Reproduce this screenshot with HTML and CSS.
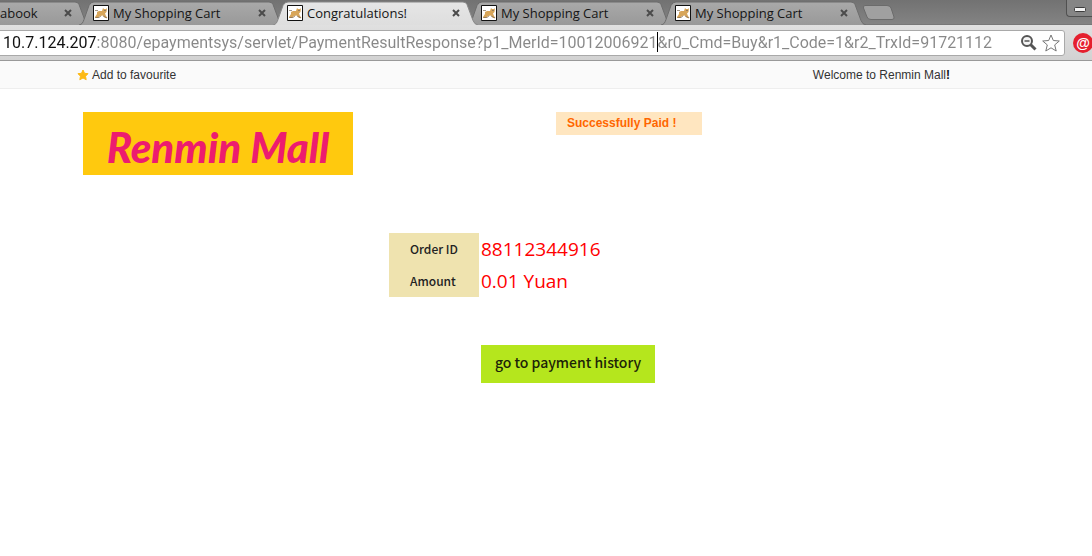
FILE: index.html
```html
<!DOCTYPE html>
<html lang="en">
<head>
<meta charset="utf-8">
<title>Congratulations!</title>
<link rel="stylesheet" href="styles.css">
</head>
<body>
<svg class="defs" aria-hidden="true">
  <defs>
    <linearGradient id="idle" x1="0" y1="0" x2="0" y2="1"><stop offset="0" stop-color="#a9a9a9"/><stop offset="1" stop-color="#999"/></linearGradient>
    <linearGradient id="front" x1="0" y1="0" x2="0" y2="1"><stop offset="0" stop-color="#e6e6e6"/><stop offset="1" stop-color="#dedede"/></linearGradient>
    <symbol id="tab-shape" viewBox="0 0 208 24"><path d="M0 24.5C3 24 4 22 5 19L10 5Q11.5 1.500 15 1.500H190Q193 1.500 194 4L200 20Q201.500 24 205 24.500"/></symbol>
    <symbol id="cat" viewBox="0 0 16 16">
      <path fill="#fff" stroke="#111" d="M.5.5h15v15H.5z"/>
      <path fill="#d8a65a" d="M2 12L4 9L4 7L6 6L9 6L10 3L11 4H13L14 3L13.500 7L12 8.500L13 11L14.500 13H12L10 10.500L7 11L5 13H2Z"/>
      <path fill="none" stroke="#7d6a58" stroke-width=".7" d="M2 5.500H5M2.500 12.500H6L8 11M10 11L14 13M11 5.500H13"/>
    </symbol>
  </defs>
</svg>
<header class="browser">
  <div class="tabstrip">
    <div class="tabs">
      <div class="tab first"><svg class="shape"><use href="#tab-shape"/></svg><span class="title">abook</span><button class="close" aria-label="Close tab"><svg viewBox="0 0 8 8"><path d="M1 1L7 7M7 1L1 7"/></svg></button></div>
      <div class="tab"><svg class="shape"><use href="#tab-shape"/></svg><svg class="favicon"><use href="#cat"/></svg><span class="title">My Shopping Cart</span><button class="close" aria-label="Close tab"><svg viewBox="0 0 8 8"><path d="M1 1L7 7M7 1L1 7"/></svg></button></div>
      <div class="tab active"><svg class="shape"><use href="#tab-shape"/></svg><svg class="favicon"><use href="#cat"/></svg><span class="title">Congratulations!</span><button class="close" aria-label="Close tab"><svg viewBox="0 0 8 8"><path d="M1 1L7 7M7 1L1 7"/></svg></button></div>
      <div class="tab"><svg class="shape"><use href="#tab-shape"/></svg><svg class="favicon"><use href="#cat"/></svg><span class="title">My Shopping Cart</span><button class="close" aria-label="Close tab"><svg viewBox="0 0 8 8"><path d="M1 1L7 7M7 1L1 7"/></svg></button></div>
      <div class="tab"><svg class="shape"><use href="#tab-shape"/></svg><svg class="favicon"><use href="#cat"/></svg><span class="title">My Shopping Cart</span><button class="close" aria-label="Close tab"><svg viewBox="0 0 8 8"><path d="M1 1L7 7M7 1L1 7"/></svg></button></div>
    </div>
    <button class="new-tab" aria-label="New tab"><svg viewBox="0 0 34 16"><path d="M3 .5H25Q28 .5 29 3L32 12Q32.500 14.500 30 14.500H9Q6 14.500 5 12L1.500 3Q1 .5 3 .5Z"/></svg></button>
    <button class="minimise" aria-label="Minimise"><svg viewBox="0 0 12 5"><rect x=".5" y=".5" width="11" height="4" rx="1"/></svg></button>
  </div>
  <div class="toolbar">
    <div class="omnibox">
      <input class="url" type="text" aria-label="Address" value="10.7.124.207:8080/epaymentsys/servlet/PaymentResultResponse?p1_MerId=10012006921&amp;r0_Cmd=Buy&amp;r1_Code=1&amp;r2_TrxId=91721112">
      <span class="caret"></span>
      <button class="tool" aria-label="Zoom"><svg viewBox="0 0 18 18"><circle cx="7" cy="7" r="5" fill="#f4f4f4" stroke="#555" stroke-width="2"/><path fill="none" stroke="#555" stroke-width="1.500" d="M4.500 7H9.500"/><path stroke="#555" stroke-width="3" d="M10.500 10.500L15.500 15.500"/></svg></button>
      <button class="tool" aria-label="Bookmark"><svg viewBox="0 0 18 18"><path fill="#fff" stroke="#777" d="M9 1L11.300 6.500L17.300 7L12.700 10.900L14.200 17L9 13.800L3.800 17L5.300 10.900L.7 7L6.700 6.500Z"/></svg></button>
    </div>
    <button class="extension" aria-label="Extension">@</button>
  </div>
</header>
<nav class="topbar">
  <a class="favourite" href="#"><svg viewBox="0 0 12 12"><path fill="#fdb913" stroke="#fdb913" stroke-linejoin="round" d="M6 1L7.500 4.300L11 4.700L8.500 7.200L9.200 10.700L6 9L2.800 10.700L3.500 7.200L1 4.700L4.500 4.300Z"/></svg>Add to favourite</a>
  <span>Welcome to Renmin Mall<b>!</b></span>
</nav>
<main>
  <div class="masthead">
    <h1 class="logo">Renmin Mall</h1>
    <p class="status">Successfully Paid !</p>
  </div>
  <section class="result">
    <dl class="order">
      <dt>Order ID</dt><dd>88112344916</dd>
      <dt>Amount</dt><dd>0.01 Yuan</dd>
    </dl>
    <button class="history">go to payment history</button>
  </section>
</main>
</body>
</html>
```
FILE: styles.css
```css
* { box-sizing: border-box; }
body { margin: 0; background: #fff; color: #333; font: 12px/16px "Liberation Sans", Arial, sans-serif; }
button { padding: 0; border: 0; background: none; }
svg { display: block; }
.defs { position: absolute; width: 0; height: 0; }
.browser { overflow: hidden; }

.tabstrip { display: flex; height: 25px; background: linear-gradient(#727272, #838383); border-bottom: 1px solid #777; }
.tabs { display: flex; flex: none; margin-left: -115px; }
.tab { position: relative; display: flex; align-items: center; width: 194px; height: 25px; padding: 1px 3px 0 14px; }
.tab.first { padding-left: 111px; }
.tab.active { z-index: 1; }
.shape { position: absolute; top: 0; left: 0; width: 208px; height: 25px; fill: url(#idle); stroke: #6d6d6d; }
.active .shape { fill: url(#front); stroke: #888; }
.favicon { position: relative; width: 16px; height: 16px; flex: none; }
.title { position: relative; flex: 1; margin-left: 4px; color: #151515; font: 13px/18px "Open Sans", sans-serif; white-space: nowrap; }
.close { position: relative; width: 8px; height: 8px; margin-right: 4px; }
.close svg { width: 8px; height: 8px; fill: none; stroke: #4b4b4b; stroke-width: 2; }
.new-tab { width: 34px; height: 16px; margin: 5px 0 0 7px; }
.new-tab svg { width: 34px; height: 16px; fill: #a0a0a0; stroke: #6b6b6b; }
.minimise { display: grid; place-items: center; width: 26px; height: 17px; margin-left: auto; padding-top: 3px; border: 1px solid #505050; border-top: 0; border-right: 0; border-radius: 0 0 0 4px; background: #858585; }
.minimise svg { width: 12px; height: 5px; fill: #f2f2f2; stroke: #3c3c3c; }

.toolbar { display: flex; align-items: center; gap: 8px; height: 36px; background: linear-gradient(#e0e0e0, #d2d2d2); border-bottom: 1px solid #999; }
.omnibox { position: relative; display: flex; align-items: center; gap: 4px; flex: 1; min-width: 0; height: 26px; margin-left: -4px; padding: 0 4px 0 6px; border: 1px solid #a9a9a9; border-radius: 3px; background: #fff; }
.url { flex: 1; min-width: 0; height: 24px; padding: 0; border: 0; outline: 0; color: transparent; background: linear-gradient(90deg, #111 93px, #888 93px); background-clip: text; -webkit-background-clip: text; font: 16px/24px Roboto, sans-serif; }
.caret { position: absolute; top: 1px; left: 660px; width: 1px; height: 20px; background: #000; }
.tool, .tool svg { width: 18px; height: 18px; flex: none; }
.extension { width: 20px; height: 20px; flex: none; margin-right: -1px; border-radius: 50%; background: #e5202e; color: #fff; font: bold 14px/18px "Liberation Sans", sans-serif; }

.topbar { display: flex; justify-content: space-between; height: 28px; padding: 6px 142px 0 77px; background: #fafafa; border-bottom: 1px solid #eee; }
.topbar b { color: #111; }
.favourite { display: flex; gap: 3px; color: inherit; text-decoration: none; }
.favourite svg { width: 12px; height: 12px; margin-top: 2px; }

.masthead { display: flex; align-items: flex-start; padding: 23px 0 0 83px; }
.logo { width: 270px; margin: 0; padding: 8px 0 0 0; background: #ffc90e; color: #ed1c6f; font: italic 900 42px/55px Lato, sans-serif; text-align: center; }
.status { width: 146px; margin: 0 0 0 203px; padding: 3px 11px 4px; background: #ffe6c0; color: #ff6600; font-weight: bold; }

.result { padding: 58px 0 0 389px; }
.order { display: grid; grid-template-columns: 90px 1fr; grid-auto-rows: 32px; column-gap: 2px; margin: 0; }
.order dt { background: #efe3af; color: #222; font: 500 12px/32px "Noto Sans CJK SC", sans-serif; padding-left: 21px; }
.order dd { margin: 0; color: #f00; font: 19px/32px "Open Sans", sans-serif; }
.history { width: 174px; height: 38px; margin: 48px 0 0 92px; padding-bottom: 4px; background: #b5e61d; color: #1c2408; font: 500 14px/20px "Noto Sans CJK SC", sans-serif; }
```
